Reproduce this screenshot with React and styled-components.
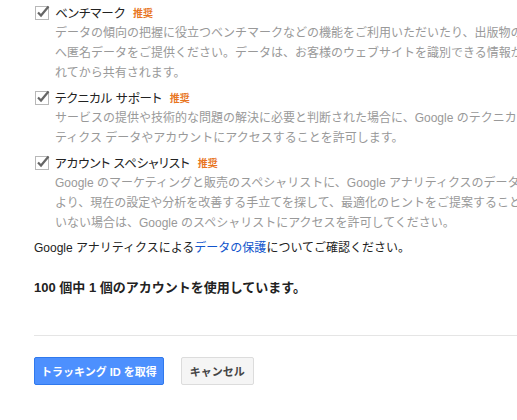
import React from 'react'
import styled, { createGlobalStyle } from 'styled-components'

const GlobalStyle = createGlobalStyle`
    html, body {
        margin: 0;
        padding: 0;
        background: #fff;
        overflow: hidden;
    }
    body {
        font-family: "Liberation Sans", "Noto Sans CJK JP", sans-serif;
        color: #222;
    }
`

const Page = styled.div`
    width: 517px;
    height: 420px;
    padding: 2px 0 0 34px;
    box-sizing: border-box;
    overflow: hidden;
`

const Options = styled.div`
    display: flex;
    flex-direction: column;
    gap: 4px;
`

const Option = styled.div`
    display: grid;
    grid-template-columns: 21px auto;
`

const LabelRow = styled.label`
    grid-column: 1 / 3;
    display: grid;
    grid-template-columns: 21px auto;
    align-items: center;
    height: 21px;
`

const Box = styled.span`
    display: flex;
    padding-left: 1px;
`

const LabelText = styled.span`
    display: flex;
    align-items: center;
    gap: 8px;
    font-size: 12.5px;
    font-feature-settings: "palt";
    color: #222;
    white-space: nowrap;
`

const Tag = styled.span`
    font-size: 10px;
    font-weight: bold;
    color: #e8761f;
`

const Description = styled.div`
    grid-column: 2;
    font-size: 12px;
    line-height: 20px;
    color: #999;
    white-space: nowrap;
`

const Line = styled.div``

const Note = styled.p`
    margin: 5px 0 0;
    font-size: 12px;
    line-height: 20px;
    color: #222;
    white-space: nowrap;
`

const Link = styled.a`
    color: #15c;
    text-decoration: none;
`

const Usage = styled.p`
    margin: 20px 0 0;
    font-size: 13px;
    font-weight: bold;
    line-height: 20px;
    color: #222;
`

const Divider = styled.hr`
    margin: 37px 0 0;
    border: 0;
    border-top: 1px solid #e5e5e5;
`

const Actions = styled.div`
    display: flex;
    gap: 17px;
    margin-top: 21px;
`

const Button = styled.button`
    height: 28px;
    padding: 0 ${p => (p.primary ? '6px' : '8px')};
    border-radius: 2px;
    font-family: "Liberation Sans", "Noto Sans CJK JP", sans-serif;
    font-size: 11px;
    font-weight: bold;
    cursor: pointer;
    border: 1px solid ${p => (p.primary ? '#3079ed' : '#dcdcdc')};
    background: ${p => (p.primary ? '#4d90fe' : '#f5f5f5')};
    color: ${p => (p.primary ? '#fff' : '#444')};
`

function Check() {
    return (
        <svg width="16" height="15" viewBox="0 0 16 15">
            <rect x="0.5" y="1.5" width="13" height="13" fill="#fff" stroke="#b8b8b8" />
            <path d="M3 7.5 L6 10.5 L13.5 1.5" fill="none" stroke="#666" strokeWidth="2.2" />
        </svg>
    )
}

const options = [
    {
        label: 'ベンチマーク',
        lines: [
            'データの傾向の把握に役立つベンチマークなどの機能をご利用いただいたり、出版物の作成に活用',
            'へ匿名データをご提供ください。データは、お客様のウェブサイトを識別できる情報がすべて削除され',
            'れてから共有されます。',
        ],
    },
    {
        label: 'テクニカル サポート',
        lines: [
            'サービスの提供や技術的な問題の解決に必要と判断された場合に、Google のテクニカル サポート',
            'ティクス データやアカウントにアクセスすることを許可します。',
        ],
    },
    {
        label: 'アカウント スペシャリスト',
        lines: [
            'Google のマーケティングと販売のスペシャリストに、Google アナリティクスのデータとアカウント',
            'より、現在の設定や分析を改善する手立てを探して、最適化のヒントをご提案することができます。',
            'いない場合は、Google のスペシャリストにアクセスを許可してください。',
        ],
    },
]

export default function App() {
    return (
        <Page>
            <GlobalStyle />
            <Options>
                {options.map(o => (
                    <Option key={o.label}>
                        <LabelRow>
                            <Box><Check /></Box>
                            <LabelText>
                                {o.label}
                                <Tag>推奨</Tag>
                            </LabelText>
                        </LabelRow>
                        <Description>
                            {o.lines.map(l => <Line key={l}>{l}</Line>)}
                        </Description>
                    </Option>
                ))}
            </Options>
            <Note>
                Google アナリティクスによる<Link href="#">データの保護</Link>についてご確認ください。
            </Note>
            <Usage>100 個中 1 個のアカウントを使用しています。</Usage>
            <Divider />
            <Actions>
                <Button primary>トラッキング ID を取得</Button>
                <Button>キャンセル</Button>
            </Actions>
        </Page>
    )
}
